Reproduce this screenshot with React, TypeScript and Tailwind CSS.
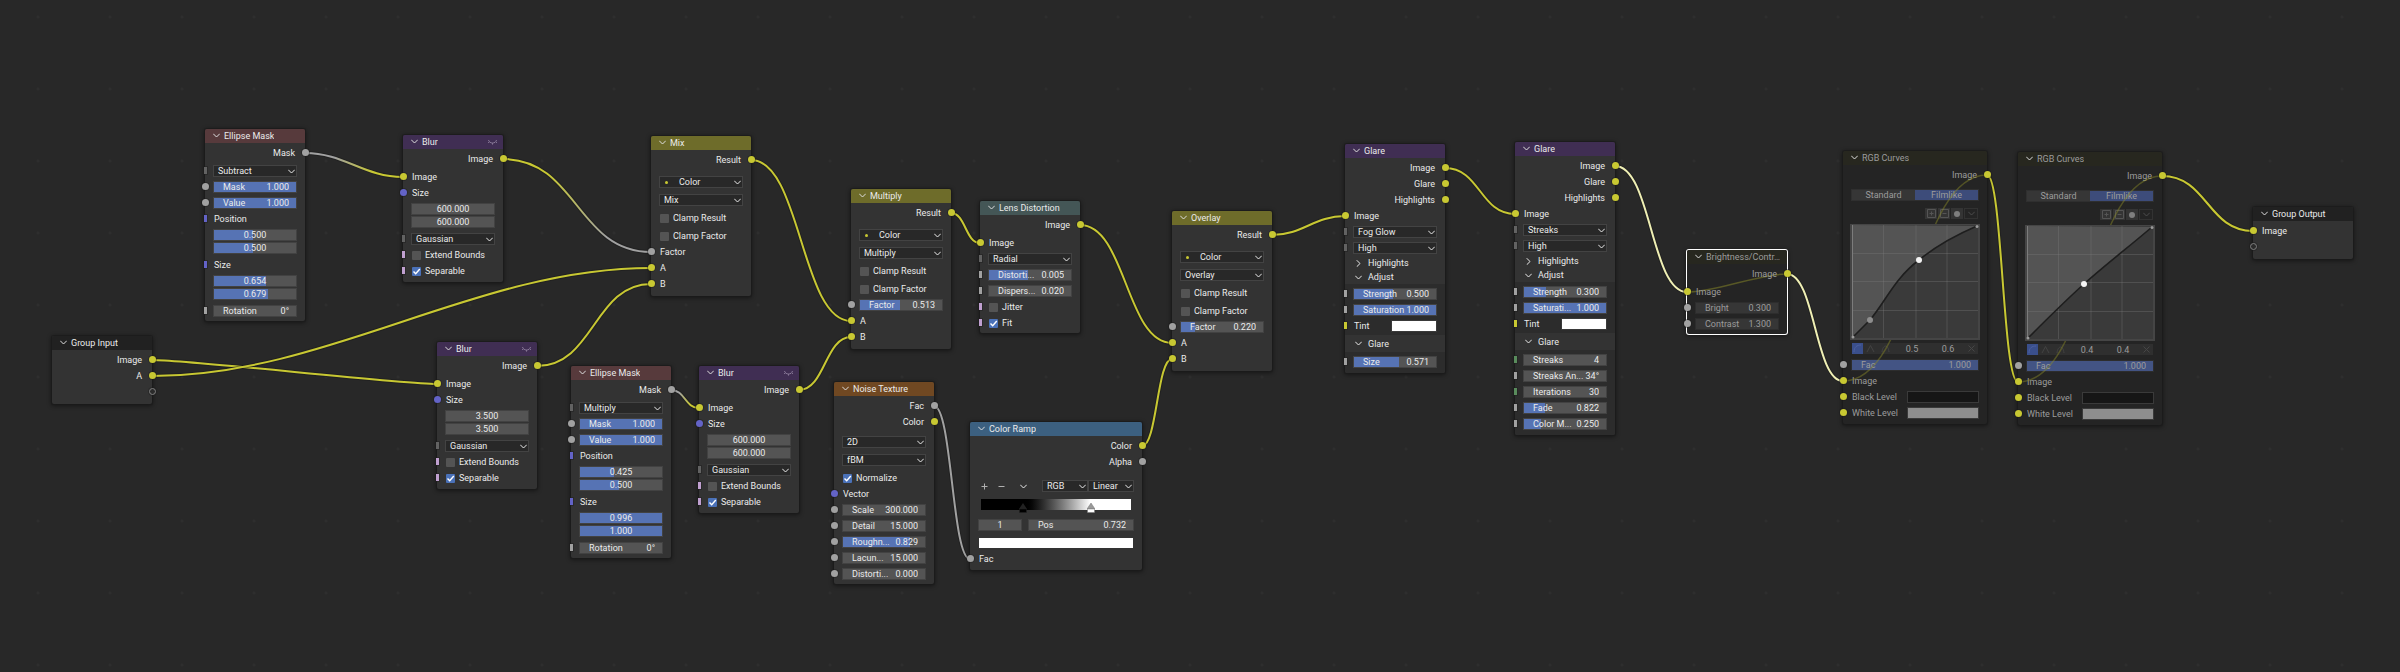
import type { ReactNode } from 'react';

const headerColors = {
  mask: 'bg-[#573a3c]',
  filter: 'bg-[#402e53]',
  color: 'bg-[#6e6c2a]',
  distort: 'bg-[#445656]',
  texture: 'bg-[#704822]',
  converter: 'bg-[#3c6080]',
  group: 'bg-[#212121]',
  muted: 'bg-[#27271f]',
};

const socketColors = {
  color: 'bg-[#c8c832]',
  value: 'bg-[#a1a1a1]',
  vector: 'bg-[#6363c7]',
  bool: 'bg-[#c0a0d0]',
  menu: 'bg-[#626262]',
  int: 'bg-[#598c5c]',
  empty: 'border border-[#808080] bg-[#2b2b2b]',
};

type SocketKind = keyof typeof socketColors;

interface SocketProps {
  kind: SocketKind;
  side?: 'left' | 'right';
  bar?: boolean;
}

function Socket({ kind, side = 'left', bar = false }: SocketProps) {
  const place = bar
    ? '-left-px top-[4px] h-[7px] w-[3px]'
    : side === 'left'
      ? '-left-[3px] top-[4px] size-[7px] rounded-full'
      : '-right-[4px] top-[4px] size-[7px] rounded-full';
  return <span className={`absolute z-20 ring-1 ring-[#1c1c1c]/40 ${place} ${socketColors[kind]}`} />;
}

function Chevron({ className = '' }: { className?: string }) {
  return (
    <svg
      className={`h-[5px] w-[7px] shrink-0 ${className}`}
      viewBox="0 0 7 5"
      fill="none"
      stroke="currentColor"
      strokeLinecap="round"
      strokeLinejoin="round"
      aria-hidden
    >
      <path d="M0.5 1L3.5 4L6.5 1" />
    </svg>
  );
}

interface NodeProps {
  title: string;
  tone: keyof typeof headerColors;
  place: string;
  width?: string;
  pad?: string;
  muted?: boolean;
  selected?: boolean;
  hidden?: boolean;
  children: ReactNode;
}

function Node({ title, tone, place, width = 'w-[100px]', pad = 'pb-0.5', muted, selected, hidden, children }: NodeProps) {
  return (
    <section
      data-muted={muted || undefined}
      aria-label={title}
      className={`group absolute rounded-[2px] bg-[#333333] text-[#ebebeb] shadow-[0_1px_4px_1px_rgba(0,0,0,0.45)] data-muted:bg-[#242424] data-muted:text-[#9c9c9c] ${place} ${width} ${pad} ${selected ? 'ring-1 ring-white' : 'ring-1 ring-[#1b1b1b]/70'}`}
    >
      <header className={`mb-[2px] flex h-[14px] items-center rounded-t-[2px] pl-[8px] pr-[6px] pb-px ${headerColors[tone]}`}>
        <button type="button" aria-label={`Collapse ${title}`} className="mr-[4px] text-[#dedede]">
          <Chevron />
        </button>
        <h2 className="truncate">{title}</h2>
        {hidden && (
          <svg className="ml-auto h-[6px] w-[9px] text-[#9a8ca8]" viewBox="0 0 9 6" fill="none" stroke="currentColor" aria-hidden>
            <path d="M0.5 1C1.5 5 7.5 5 8.5 1M1 3L0.2 4M8 3L8.8 4M4.5 4.2V5.6" strokeWidth={0.8} />
          </svg>
        )}
      </header>
      {children}
    </section>
  );
}

function Row({ children, className = '' }: { children: ReactNode; className?: string }) {
  return <div className={`relative flex h-4 items-center px-[8px] ${className}`}>{children}</div>;
}

function Output({ label, kind = 'color' }: { label: string; kind?: SocketKind }) {
  return (
    <Row className="justify-end pr-[10px]">
      <Socket kind={kind} side="right" />
      {label}
    </Row>
  );
}

function Input({ label, kind = 'color', bar }: { label: string; kind?: SocketKind; bar?: boolean }) {
  return (
    <Row className="pl-[9px]">
      <Socket kind={kind} bar={bar} />
      {label}
    </Row>
  );
}

interface FieldProps {
  label?: string;
  name?: string;
  value: string;
  fill?: number;
  className?: string;
}

// Number field: an optional label on the left and a blue fill behind the value
function Field({ label, name, value, fill, className = 'w-full' }: FieldProps) {
  return (
    <label
      className={`relative flex h-3 items-center overflow-hidden border border-[#424242] bg-[#545454] leading-[10px] group-data-muted:border-[#2d2d2d] group-data-muted:bg-[#363636] ${className}`}
    >
      {fill !== undefined && (
        <span
          className="absolute inset-y-0 left-0 bg-[#5673b4] group-data-muted:bg-[#435484]"
          style={{ width: `${fill}%` }}
        />
      )}
      {label && <span className="relative shrink-0 pl-[9px]">{label}</span>}
      <input
        defaultValue={value}
        aria-label={label ? undefined : name}
        className={`relative h-full w-0 min-w-0 flex-1 bg-transparent outline-none ${label ? 'pr-[7px] text-right' : 'text-center'}`}
      />
    </label>
  );
}

function Slider({ kind, bar, ...field }: FieldProps & { kind?: SocketKind; bar?: boolean }) {
  return (
    <Row>
      {kind && <Socket kind={kind} bar={bar} />}
      <Field {...field} />
    </Row>
  );
}

function Vector({ name, values, fills = [] }: { name: string; values: string[]; fills?: number[] }) {
  return (
    <div className="flex h-[30px] flex-col gap-px px-[8px] pt-[2px]">
      {values.map((value, i) => (
        <Field key={i} name={`${name} ${'XY'[i]}`} value={value} fill={fills[i]} />
      ))}
    </div>
  );
}

function Select({ name, value, dot, className = 'w-full' }: { name: string; value: string; dot?: boolean; className?: string }) {
  return (
    <div className={`relative h-3 ${className}`}>
      <select
        aria-label={name}
        defaultValue={value}
        className={`block h-3 w-full appearance-none border border-[#434343] bg-[#282828] leading-[10px] outline-none ${dot ? 'pl-[19px]' : 'pl-[4px]'}`}
      >
        <option>{value}</option>
      </select>
      {dot && <span className="absolute left-[6px] top-[5px] size-[3px] rounded-full bg-[#c8c832]" />}
      <Chevron className="pointer-events-none absolute right-[2px] top-[4px]" />
    </div>
  );
}

function Menu({ name, value, dot, socket = false }: { name: string; value: string; dot?: boolean; socket?: boolean }) {
  return (
    <Row>
      {socket && <Socket kind="menu" bar />}
      <Select name={name} value={value} dot={dot} />
    </Row>
  );
}

function Check({ label, checked = false, socket = false }: { label: string; checked?: boolean; socket?: boolean }) {
  return (
    <Row className="pl-[9px]">
      {socket && <Socket kind="bool" bar />}
      <label className="flex items-center gap-[4px]">
        <span className="relative block size-[9px]">
          <input
            type="checkbox"
            defaultChecked={checked}
            className="peer block size-[9px] appearance-none rounded-[1px] bg-[#545454] checked:bg-[#4a71b8]"
          />
          <svg
            className="pointer-events-none absolute inset-0 hidden size-[9px] peer-checked:block"
            viewBox="0 0 9 9"
            fill="none"
            stroke="white"
            strokeWidth={1.4}
            aria-hidden
          >
            <path d="M1.5 4.5L3.7 6.8L7.8 2" />
          </svg>
        </span>
        {label}
      </label>
    </Row>
  );
}

function Swatch({ label, color, width, bar }: { label: string; color: string; width: string; bar?: boolean }) {
  return (
    <Row className="justify-between pl-[9px]">
      <Socket kind="color" bar={bar} />
      {label}
      <button type="button" aria-label={`${label} color`} className={`h-3 border border-[#3a3a3a] ${width} ${color}`} />
    </Row>
  );
}

function Toggle({ label, open = false, className = 'h-[14px]' }: { label: string; open?: boolean; className?: string }) {
  return (
    <button type="button" aria-expanded={open} className={`flex w-full items-center gap-[6px] pl-[10px] ${className}`}>
      <Chevron className={open ? '' : '-rotate-90'} />
      {label}
    </button>
  );
}

function EllipseMask({ place, mode, position, size, fills }: { place: string; mode: string; position: string[]; size: string[]; fills: number[] }) {
  return (
    <Node title="Ellipse Mask" tone="mask" place={place}>
      <Output label="Mask" kind="value" />
      <div className="mt-[2px]">
        <Menu name="Operation" value={mode} socket />
        <Slider label="Mask" value="1.000" fill={100} kind="value" />
        <Slider label="Value" value="1.000" fill={100} kind="value" />
        <Input label="Position" kind="vector" bar />
        <Vector name="Position" values={position} fills={fills.slice(0, 2)} />
        <Input label="Size" kind="vector" bar />
        <Vector name="Size" values={size} fills={fills.slice(2)} />
        <Slider label="Rotation" value="0°" kind="value" bar />
      </div>
    </Node>
  );
}

function Blur({ place, size }: { place: string; size: string }) {
  return (
    <Node title="Blur" tone="filter" place={place} pad="pb-[3px]" hidden>
      <Output label="Image" />
      <div className="mt-[2px]">
        <Input label="Image" />
        <Input label="Size" kind="vector" />
        <Vector name="Size" values={[size, size]} />
        <Menu name="Filter type" value="Gaussian" socket />
        <Check label="Extend Bounds" socket />
        <Check label="Separable" checked socket />
      </div>
    </Node>
  );
}

function Mix({ title, place, factor, fill }: { title: string; place: string; factor?: string; fill?: number }) {
  return (
    <Node title={title} tone="color" place={place} pad="pb-1">
      <Output label="Result" />
      <div className="mt-[6px] flex flex-col gap-[2px]">
        <Menu name="Data type" value="Color" dot />
        <Menu name="Blend mode" value={title} />
        <Check label="Clamp Result" />
        <Check label="Clamp Factor" />
      </div>
      {factor ? <Slider label="Factor" value={factor} fill={fill} kind="value" /> : <Input label="Factor" kind="value" />}
      <Input label="A" />
      <Input label="B" />
    </Node>
  );
}

interface GlareProps {
  place: string;
  mode: string;
  strength: string;
  fill: number;
  saturation: string;
  children: ReactNode;
}

function Glare({ place, mode, strength, fill, saturation, children }: GlareProps) {
  return (
    <Node title="Glare" tone="filter" place={place} pad="pb-0">
      <Output label="Image" />
      <Output label="Glare" />
      <Output label="Highlights" />
      <Input label="Image" />
      <Menu name="Glare type" value={mode} socket />
      <Menu name="Quality" value="High" socket />
      <Toggle label="Highlights" />
      <Toggle label="Adjust" open />
      <div className="bg-[#2c2c2c] pb-px pt-[2px]">
        <Slider label="Strength" value={strength} fill={fill} kind="value" bar />
        <Slider label={saturation} value="1.000" fill={100} kind="value" bar />
        <Swatch label="Tint" color="bg-white" width="w-[46px]" bar />
      </div>
      <Toggle label="Glare" open className="h-[17px]" />
      <div className="rounded-b-[2px] bg-[#2c2c2c] pb-[3px] pt-[2px]">{children}</div>
    </Node>
  );
}

function ColorRamp() {
  return (
    <Node title="Color Ramp" tone="converter" place="left-[970px] top-[422px]" width="w-[172px]" pad="pb-[3px]">
      <Output label="Color" />
      <Output label="Alpha" kind="value" />
      <div className="mt-2 flex h-4 items-center pl-[11px] pr-[8px]">
        <button type="button" aria-label="Add stop" className="mr-[10px] w-[7px] text-[#b0b0b0]">
          <svg viewBox="0 0 7 7" className="size-[7px]" stroke="currentColor" aria-hidden>
            <path d="M3.5 0.5V6.5M0.5 3.5H6.5" />
          </svg>
        </button>
        <button type="button" aria-label="Remove stop" className="mr-[15px] w-[7px] text-[#b0b0b0]">
          <svg viewBox="0 0 7 7" className="size-[7px]" stroke="currentColor" aria-hidden>
            <path d="M0.5 3.5H6.5" />
          </svg>
        </button>
        <button type="button" aria-label="Ramp tools">
          <Chevron />
        </button>
        <div className="ml-auto flex">
          <Select name="Color mode" value="RGB" className="w-[46px]" />
          <Select name="Interpolation" value="Linear" className="w-[46px]" />
        </div>
      </div>
      <div className="relative mx-[11px] mt-[5px] h-[11px] bg-linear-to-r from-black from-28% to-white to-73%">
        <svg className="absolute left-[28%] top-[4px] h-[10px] w-[8px] -translate-x-1/2" viewBox="0 0 8 10" aria-hidden>
          <path d="M4 0L8 6H0Z" fill="#222" />
          <path d="M0.5 6H7.5V9.5H0.5Z" fill="#000" stroke="#222" strokeWidth={0.5} />
        </svg>
        <svg className="absolute left-[73%] top-[4px] h-[10px] w-[8px] -translate-x-1/2" viewBox="0 0 8 10" aria-hidden>
          <path d="M4 0L8 6H0Z" fill="#999" stroke="#777" strokeWidth={0.5} />
          <path d="M0.5 6H7.5V9.5H0.5Z" fill="#fff" stroke="#777" strokeWidth={0.5} />
        </svg>
      </div>
      <div className="mt-[9px] flex justify-between px-[8px]">
        <Field name="Active stop" value="1" className="w-[44px]" />
        <Field label="Pos" value="0.732" className="w-[106px]" />
      </div>
      <button type="button" aria-label="Stop color" className="mx-[9px] mb-[3px] mt-[7px] block h-[10px] w-[154px] bg-white" />
      <Input label="Fac" kind="value" />
    </Node>
  );
}

const toolButton = 'flex h-[11px] w-[12px] items-center justify-center bg-[#343434] text-[#555555]';

interface CurvesProps {
  place: string;
  curve: string;
  point: [number, number];
  faded?: [number, number];
  x: string;
  y: string;
}

function RgbCurves({ place, curve, point, faded, x, y }: CurvesProps) {
  return (
    <Node title="RGB Curves" tone="muted" place={place} width="w-[144px]" pad="pb-[3px]" muted>
      <svg className="pointer-events-none absolute left-0 top-0 z-10 size-full overflow-visible" fill="none" aria-hidden>
        <path d="M0 230C72 230 72 24 144 24" stroke="#8c8c28" strokeOpacity={0.45} strokeWidth={1.5} />
      </svg>
      <Output label="Image" />
      <div className="mx-[8px] mt-[6px] flex h-3 border border-[#2f2f2f] leading-[10px]">
        <button type="button" className="flex flex-1 items-center justify-center bg-[#363636]">Standard</button>
        <button type="button" className="flex flex-1 items-center justify-center bg-[#3d4c7a]">Filmlike</button>
      </div>
      <div className="mt-[7px] flex justify-end gap-px pr-[9px]">
        <button type="button" aria-label="Zoom in" className={toolButton}>
          <svg viewBox="0 0 9 9" className="size-[9px]" fill="none" stroke="currentColor" aria-hidden>
            <path d="M0.5 0.5H8.5V8.5H0.5ZM4.5 2.5V6.5M2.5 4.5H6.5" />
          </svg>
        </button>
        <button type="button" aria-label="Zoom out" className={toolButton}>
          <svg viewBox="0 0 9 9" className="size-[9px]" fill="none" stroke="currentColor" aria-hidden>
            <path d="M0.5 0.5H8.5V8.5H0.5ZM2.5 4.5H6.5" />
          </svg>
        </button>
        <button type="button" aria-label="Clipping" className={toolButton}>
          <span className="size-[6px] rounded-full bg-[#7e7e7e]" />
        </button>
        <button type="button" aria-label="Curve tools" className="flex h-[11px] w-[14px] items-center justify-center border border-[#323232] text-[#4c4c4c]">
          <Chevron />
        </button>
      </div>
      <svg className="relative z-10 mx-[7px] mt-[5px] block h-[116px] w-[130px]" viewBox="0 0 130 116" fill="none" aria-hidden>
        <rect width="130" height="116" fill="#454545" />
        <rect x="2" y="1" width="126" height="113" fill="#3a3a3a" />
        <path d={`${curve}L2 1V113Z`} fill="#545454" />
        <path d="M33.5 1V114M66 1V114M97 1V114M2 29.5H128M2 57.5H128M2 86.5H128" stroke="#7a7a7a" strokeOpacity={0.35} />
        <path d="M2.5 1V114" stroke="#7c7c7c" />
        <path d={curve} stroke="#1e1e1e" strokeWidth={1.6} />
        <circle cx="3" cy="113" r="1.5" fill="#9a9a9a" />
        <circle cx="127" cy="2.5" r="1.5" fill="#9a9a9a" />
        {faded && <circle cx={faded[0]} cy={faded[1]} r="3" fill="#8e8e8e" />}
        <circle cx={point[0]} cy={point[1]} r="3" fill="#f4f4f4" />
      </svg>
      <div className="mx-[9px] mt-[3px] flex h-[11px] bg-[#2f2f2f]">
        <button type="button" aria-label="Auto handle" className="flex w-[11px] items-center justify-center bg-[#3a4f8c] text-[#4c60a0]">
          <svg viewBox="0 0 9 9" className="size-[9px]" fill="none" stroke="currentColor" aria-hidden>
            <path d="M1 8C1 3 4 1 8 1" />
          </svg>
        </button>
        <button type="button" aria-label="Vector handle" className="flex w-[15px] items-center justify-center text-[#434343]">
          <svg viewBox="0 0 9 9" className="size-[9px]" fill="none" stroke="currentColor" aria-hidden>
            <path d="M1 8L4.5 1.5L8 8" />
          </svg>
        </button>
        <button type="button" aria-label="Auto clamped handle" className="flex w-[15px] items-center justify-center text-[#434343]">
          <svg viewBox="0 0 9 9" className="size-[9px]" fill="none" stroke="currentColor" aria-hidden>
            <path d="M1 8C2 0 7 0 8 8" />
          </svg>
        </button>
        <input aria-label="Point X" defaultValue={x} className="w-[38px] bg-transparent text-center outline-none" />
        <input aria-label="Point Y" defaultValue={y} className="w-[34px] bg-transparent text-center outline-none" />
        <button type="button" aria-label="Delete point" className="flex flex-1 items-center justify-center text-[#464646]">
          <svg viewBox="0 0 7 7" className="size-[7px]" stroke="currentColor" aria-hidden>
            <path d="M0.5 0.5L6.5 6.5M6.5 0.5L0.5 6.5" />
          </svg>
        </button>
      </div>
      <div className="mt-[3px]">
        <Slider label="Fac" value="1.000" fill={100} kind="value" />
        <Input label="Image" />
        <Swatch label="Black Level" color="bg-[#161616]" width="w-[72px]" />
        <Swatch label="White Level" color="bg-[#8e8e8e]" width="w-[72px]" />
      </div>
    </Node>
  );
}

const YELLOW = '#c8c832';
const GRAY = '#a1a1a1';
const ACTIVE = '#efefb4';

// x1, y1, x2, y2, start color, end color
const links: [number, number, number, number, string, string][] = [
  [152, 360, 437, 384, YELLOW, YELLOW],
  [152, 376, 651, 268, YELLOW, YELLOW],
  [305, 153, 403, 177, GRAY, YELLOW],
  [503, 159, 651, 252, YELLOW, GRAY],
  [537, 366, 651, 284, YELLOW, YELLOW],
  [671, 390, 699, 408, GRAY, YELLOW],
  [751, 160, 851, 321, YELLOW, YELLOW],
  [799, 390, 851, 337, YELLOW, YELLOW],
  [951, 213, 980, 243, YELLOW, YELLOW],
  [1080, 225, 1172, 343, YELLOW, YELLOW],
  [934, 406, 970, 559, GRAY, GRAY],
  [1142, 446, 1172, 359, YELLOW, YELLOW],
  [1272, 235, 1345, 216, YELLOW, YELLOW],
  [1445, 168, 1515, 214, YELLOW, YELLOW],
  [1615, 166, 1687, 292, ACTIVE, ACTIVE],
  [1787, 274, 1843, 381, ACTIVE, ACTIVE],
  [1987, 175, 2018, 382, YELLOW, YELLOW],
  [2162, 176, 2253, 231, YELLOW, YELLOW],
];

// Shallow links get shorter handles, so they stay nearly straight
function linkPath(x1: number, y1: number, x2: number, y2: number) {
  const dx = x2 - x1;
  const slope = Math.abs(y2 - y1) / dx;
  const handle = 0.5 * dx * Math.min(1, slope * 3.25);
  return `M${x1} ${y1}C${x1 + handle} ${y1} ${x2 - handle} ${y2} ${x2} ${y2}`;
}

function Links() {
  return (
    <svg className="pointer-events-none absolute left-0 top-0 size-full" fill="none" aria-hidden>
      {links.map(([x1, y1, x2, y2, from, to], i) => (
        <g key={i}>
          <linearGradient id={`link-${i}`} gradientUnits="userSpaceOnUse" x1={x1} y1="0" x2={x2} y2="0">
            <stop offset="0.3" stopColor={from} />
            <stop offset="0.7" stopColor={to} />
          </linearGradient>
          <path d={linkPath(x1, y1, x2, y2)} stroke="#1a1a1a" strokeOpacity={0.5} strokeWidth={4} />
          <path d={linkPath(x1, y1, x2, y2)} stroke={`url(#link-${i})`} strokeWidth={2} />
        </g>
      ))}
    </svg>
  );
}

export default function App() {
  return (
    <main className="relative min-h-screen w-full overflow-hidden bg-[#282828] bg-[radial-gradient(circle,#2e2e2e_1px,transparent_2px)] bg-[size:72px_72px] bg-[position:2px_-19px] font-['Roboto',sans-serif] text-[9px] leading-[12px]">
      <Links />

      <Node title="Group Input" tone="group" place="left-[52px] top-[336px]" pad="pb-1">
        <Output label="Image" />
        <Output label="A" />
        <Output label="" kind="empty" />
      </Node>

      <EllipseMask
        place="left-[205px] top-[129px]"
        mode="Subtract"
        position={['0.500', '0.500']}
        size={['0.654', '0.679']}
        fills={[47, 47, 63, 66]}
      />
      <Blur place="left-[403px] top-[135px]" size="600.000" />
      <Blur place="left-[437px] top-[342px]" size="3.500" />
      <EllipseMask
        place="left-[571px] top-[366px]"
        mode="Multiply"
        position={['0.425', '0.500']}
        size={['0.996', '1.000']}
        fills={[41, 47, 100, 100]}
      />
      <Blur place="left-[699px] top-[366px]" size="600.000" />

      <Mix title="Mix" place="left-[651px] top-[136px]" />
      <Mix title="Multiply" place="left-[851px] top-[189px]" factor="0.513" fill={49} />

      <Node title="Lens Distortion" tone="distort" place="left-[980px] top-[201px]">
        <Output label="Image" />
        <div className="mt-[2px]">
          <Input label="Image" />
          <Menu name="Distortion type" value="Radial" socket />
          <Slider label="Distorti..." value="0.005" fill={48} kind="value" bar />
          <Slider label="Dispers..." value="0.020" kind="value" bar />
          <Check label="Jitter" socket />
          <Check label="Fit" checked socket />
        </div>
      </Node>

      <Node title="Noise Texture" tone="texture" place="left-[834px] top-[382px]">
        <Output label="Fac" kind="value" />
        <Output label="Color" />
        <div className="mt-[4px] flex flex-col gap-[2px]">
          <Menu name="Dimensions" value="2D" />
          <Menu name="Noise type" value="fBM" />
          <Check label="Normalize" checked />
        </div>
        <Input label="Vector" kind="vector" />
        <Slider label="Scale" value="300.000" kind="value" />
        <Slider label="Detail" value="15.000" kind="value" />
        <Slider label="Roughn..." value="0.829" fill={82} kind="value" />
        <Slider label="Lacun..." value="15.000" kind="value" />
        <Slider label="Distorti..." value="0.000" kind="value" />
      </Node>

      <ColorRamp />
      <Mix title="Overlay" place="left-[1172px] top-[211px]" factor="0.220" fill={17} />

      <Glare place="left-[1345px] top-[144px]" mode="Fog Glow" strength="0.500" fill={48} saturation="Saturation">
        <Slider label="Size" value="0.571" fill={55} kind="value" bar />
      </Glare>
      <Glare place="left-[1515px] top-[142px]" mode="Streaks" strength="0.300" fill={27} saturation="Saturati...">
        <Slider label="Streaks" value="4" kind="int" bar />
        <Slider label="Streaks An..." value="34°" kind="value" bar />
        <Slider label="Iterations" value="30" kind="int" bar />
        <Slider label="Fade" value="0.822" fill={26} kind="value" bar />
        <Slider label="Color M..." value="0.250" fill={21} kind="value" bar />
      </Glare>

      <Node title="Brightness/Contr..." tone="muted" place="left-[1687px] top-[250px]" muted selected>
        <svg className="pointer-events-none absolute left-0 top-0 size-full overflow-visible" fill="none" aria-hidden>
          <path d="M0 42C30 42 70 24 100 24" stroke="#8c8c28" strokeOpacity={0.5} strokeWidth={1.5} />
        </svg>
        <Output label="Image" />
        <div className="mt-[2px]">
          <Input label="Image" />
          <Slider label="Bright" value="0.300" kind="value" />
          <Slider label="Contrast" value="1.300" kind="value" />
        </div>
      </Node>

      <RgbCurves
        place="left-[1843px] top-[151px]"
        curve="M3 113L20 96C36 77 44 55 69 36C86 22 106 11 127 2"
        point={[69, 36]}
        faded={[20, 96]}
        x="0.5"
        y="0.6"
      />
      <RgbCurves
        place="left-[2018px] top-[152px]"
        curve="M3 113C20 96 40 76 59 59C80 40 105 21 127 2"
        point={[59, 59]}
        x="0.4"
        y="0.4"
      />

      <Node title="Group Output" tone="group" place="left-[2253px] top-[207px]" pad="pb-1">
        <Input label="Image" />
        <Input label="" kind="empty" />
      </Node>
    </main>
  );
}
